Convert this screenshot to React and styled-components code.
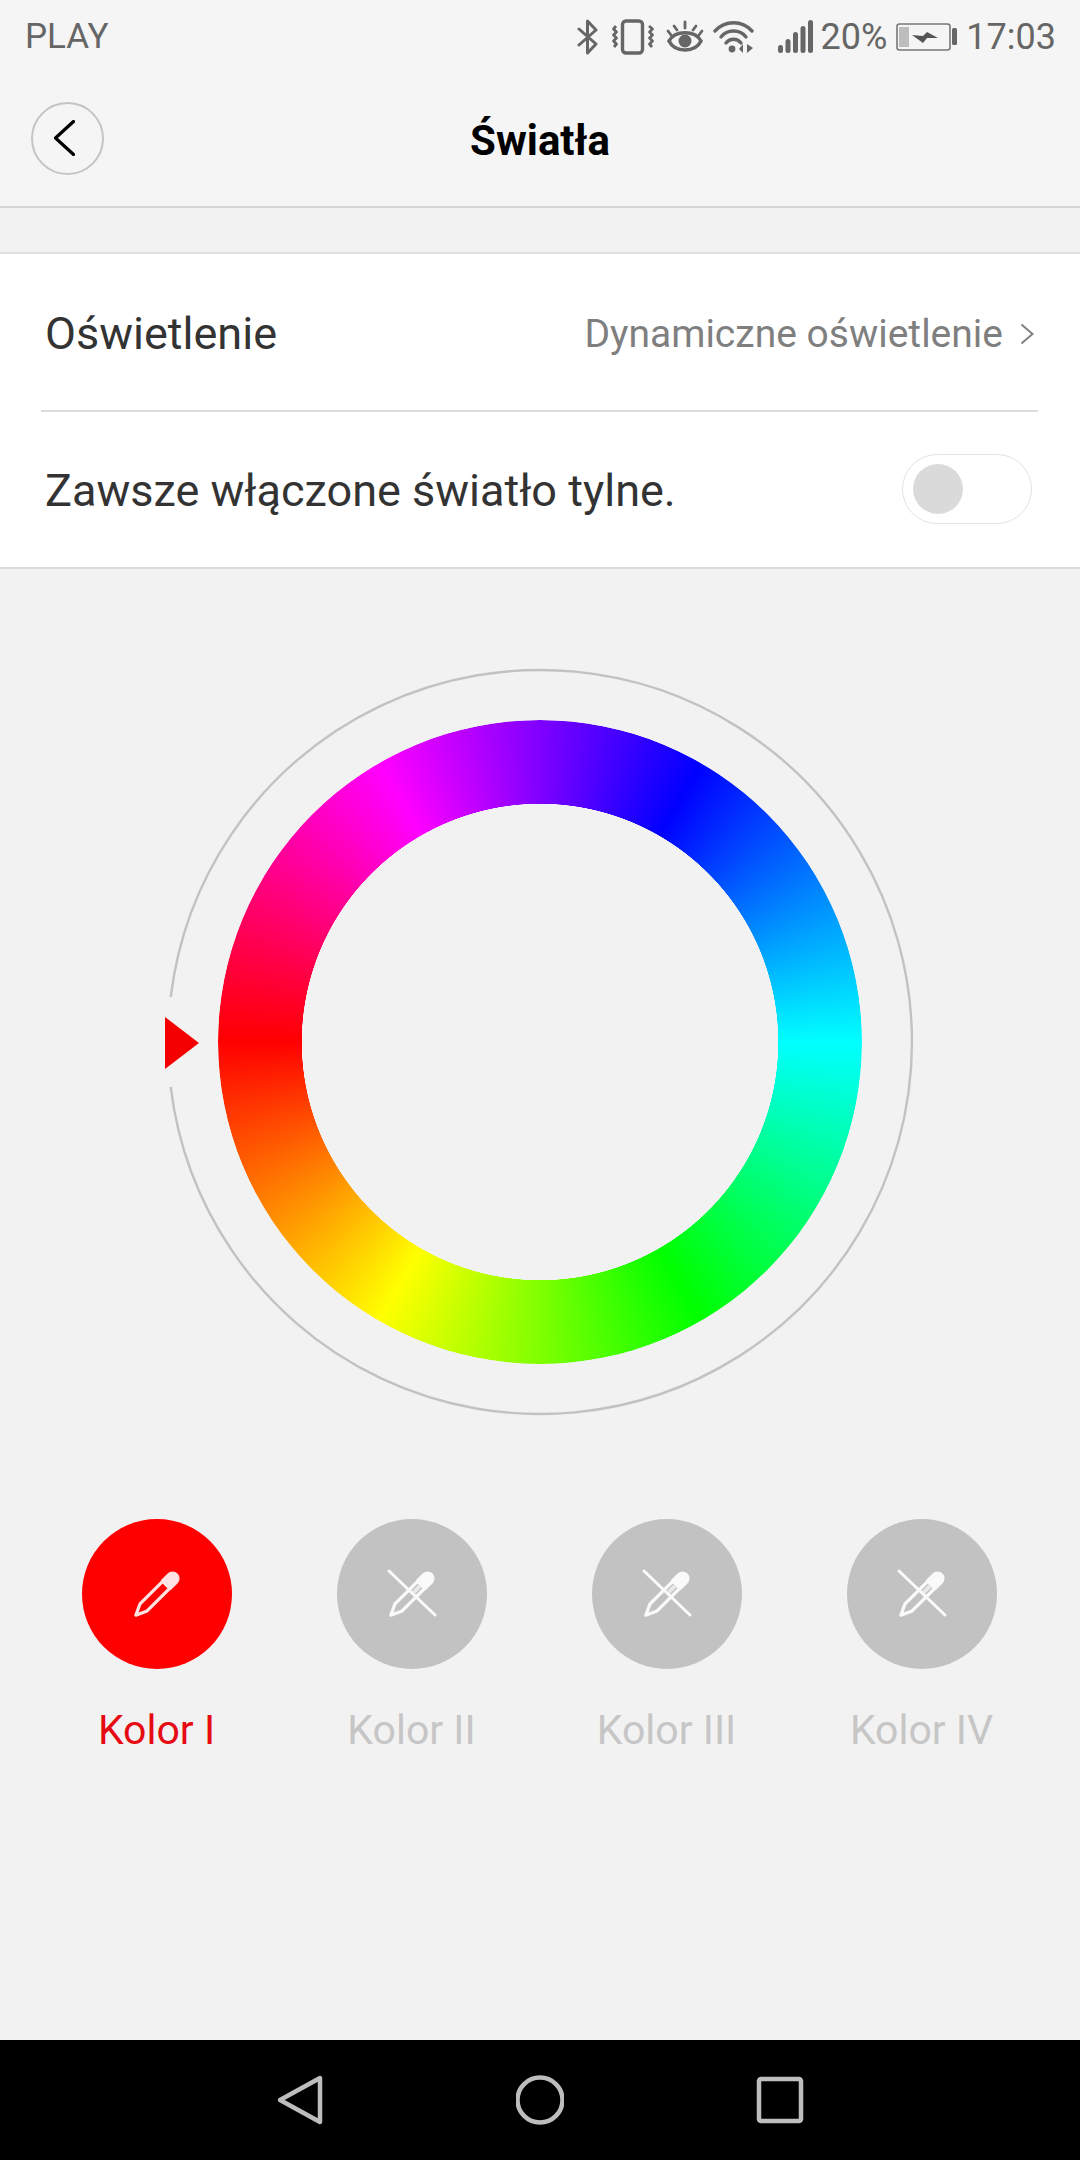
import React from "react"
import styled, { createGlobalStyle } from "styled-components"

const GlobalStyle = createGlobalStyle`
  html, body { margin: 0; padding: 0; background: #f2f2f2; }
  * { box-sizing: border-box; }
`

const Page = styled.div`
  width: 1080px;
  height: 2160px;
  display: flex;
  flex-direction: column;
  background: #f2f2f2;
  font-family: Roboto, "Noto Sans", sans-serif;
  overflow: hidden;
`

const StatusBar = styled.div`
  height: 70px;
  flex: none;
  padding: 3px 24px 0 25px;
  display: flex;
  align-items: center;
  justify-content: space-between;
  background: #f5f5f5;
  color: #666;
  font-size: 35px;
  svg { display: block; }
`

const StatusRight = styled.div`
  display: flex;
  align-items: center;
`

const Percent = styled.span`
  font-size: 36px;
  margin: 0 9px 0 7px;
`

const Clock = styled.span`
  font-size: 36px;
  margin-left: 9px;
`

const Header = styled.div`
  height: 138px;
  flex: none;
  padding-left: 31px;
  display: flex;
  align-items: center;
  position: relative;
  background: #f5f5f5;
  border-bottom: 2px solid #d6d6d6;
`

const BackButton = styled.div`
  width: 73px;
  height: 73px;
  padding-right: 6px;
  border: 2px solid #c4c4c4;
  border-radius: 50%;
  display: flex;
  align-items: center;
  justify-content: center;
`

const Title = styled.div`
  position: absolute;
  left: 0;
  right: 0;
  top: 46px;
  text-align: center;
  font-size: 42px;
  font-weight: 700;
  line-height: 50px;
  color: #000;
`

const Band = styled.div`
  height: 46px;
  flex: none;
  border-bottom: 2px solid #e0e0e0;
`

const Settings = styled.div`
  flex: none;
  background: #fff;
  border-bottom: 2px solid #d9d9d9;
`

const Row = styled.div`
  height: ${props => props.$height}px;
  padding: 2px 46px 0 45px;
  display: flex;
  align-items: center;
  justify-content: space-between;
  color: #333;
  font-size: 45px;
`

const Divider = styled.div`
  height: 2px;
  margin: 0 42px 0 41px;
  background: #dcdcdc;
`

const RowValue = styled.div`
  display: flex;
  align-items: center;
  gap: 17px;
  margin-top: 2px;
  color: #7f7f7f;
  font-size: 39px;
`

const Toggle = styled.div`
  width: 130px;
  height: 70px;
  padding: 0 10px;
  margin: -4px 2px 0 0;
  border: 1px solid #e2e2e2;
  border-radius: 35px;
  display: flex;
  align-items: center;
  &::before {
    content: "";
    width: 50px;
    height: 50px;
    border-radius: 50%;
    background: #dadada;
  }
`

const Content = styled.div`
  flex: 1;
  display: flex;
  flex-direction: column;
  align-items: center;
  padding-top: 99px;
`

const Dial = styled.div`
  width: 748px;
  height: 748px;
  display: grid;
  place-items: center;
  position: relative;
  > * { grid-area: 1 / 1; }
`

const HueRing = styled.div`
  width: 644px;
  height: 644px;
  border-radius: 50%;
  background: conic-gradient(from 30deg, #0000ff, #00ffff 60deg, #00ff00 120deg, #ffff00 180deg, #ff0000 240deg, #ff00ff 300deg, #0000ff 360deg);
  mask: radial-gradient(circle closest-side, transparent 238px, #000 238.5px);
`

const Marker = styled.div`
  position: absolute;
  left: -1px;
  top: 349px;
  width: 0;
  height: 0;
  border-left: 34px solid #f50000;
  border-top: 26px solid transparent;
  border-bottom: 26px solid transparent;
`

const Swatches = styled.div`
  margin: 103px 2px 0 0;
  display: flex;
  gap: 105px;
`

const Swatch = styled.div`
  width: 150px;
  display: flex;
  flex-direction: column;
  align-items: center;
`

const SwatchCircle = styled.div`
  width: 150px;
  height: 150px;
  border-radius: 50%;
  background: ${props => props.$active ? "#ff0000" : "#c2c2c2"};
  display: flex;
  align-items: center;
  justify-content: center;
`

const SwatchLabel = styled.div`
  margin-top: 36px;
  font-size: 41px;
  line-height: 50px;
  white-space: nowrap;
  color: ${props => props.$active ? "#e60b12" : "#c6c6c6"};
`

const NavBar = styled.div`
  height: 120px;
  flex: none;
  background: #000;
  display: flex;
  align-items: center;
  justify-content: center;
  gap: 192px;
  svg { display: block; }
`

const Bluetooth = () => (
  <svg width="22" height="36" viewBox="0 0 22 36" fill="none" stroke="#666" strokeWidth="3" strokeLinejoin="round" strokeLinecap="round">
    <path d="M2 10 L19 25 L10.5 34 V2 L19 11 L2 26" />
  </svg>
)

const Vibrate = () => (
  <svg width="44" height="36" viewBox="0 0 44 36" fill="none" stroke="#666" strokeLinejoin="round" style={{ marginLeft: 12 }}>
    <rect x="11.5" y="2" width="20" height="32" rx="3.5" strokeWidth="3.4" />
    <path d="M5 7 L2.5 10 L5.5 13 L2.5 16 L5.5 19 L2.5 22 L5.5 25 L3 28" strokeWidth="2.8" />
    <path d="M38 7 L41.5 10 L38.5 13 L41.5 16 L38.5 19 L41.5 22 L38.5 25 L41 28" strokeWidth="2.8" />
  </svg>
)

const Eye = () => (
  <svg width="38" height="34" viewBox="0 0 38 34" fill="none" stroke="#666" strokeLinecap="round" style={{ marginLeft: 11 }}>
    <path d="M3 21 C9 10 29 10 35 21 C29 33 9 33 3 21 Z" strokeWidth="3.6" />
    <circle cx="19" cy="21" r="6.5" fill="#666" stroke="none" />
    <path d="M19 2 V8 M8 6 L11 10 M30 6 L27 10 M2 11 L5 15 M36 11 L33 15" strokeWidth="2.8" />
  </svg>
)

const Wifi = () => (
  <svg width="42" height="34" viewBox="0 0 42 34" fill="none" stroke="#666" strokeLinecap="round" style={{ marginLeft: 9 }}>
    <path d="M2 11 C12 0 29 0 39 11" strokeWidth="3.4" />
    <path d="M8 17 C14 9 27 9 33 17" strokeWidth="3.4" />
    <path d="M13 23 C17 18 24 18 28 23" strokeWidth="3.4" />
    <circle cx="19" cy="29" r="3.4" fill="#666" stroke="none" />
    <path d="M30 24 V33 L26 29 Z M34 24 V33 L40 28 Z" fill="#666" stroke="none" />
  </svg>
)

const Signal = () => (
  <svg width="36" height="34" viewBox="0 0 36 34" fill="#666" style={{ marginLeft: 23 }}>
    <rect x="0" y="25" width="5" height="8" rx="2.5" />
    <rect x="7.5" y="19" width="5" height="14" rx="2.5" />
    <rect x="15" y="12" width="5" height="21" rx="2.5" />
    <rect x="22.5" y="6" width="5" height="27" rx="2.5" />
    <rect x="30" y="0" width="5" height="33" rx="2.5" />
  </svg>
)

const Battery = () => (
  <svg width="61" height="28" viewBox="0 0 61 28">
    <rect x="1" y="1" width="53" height="26" rx="2.5" fill="none" stroke="#777" strokeWidth="1.6" />
    <rect x="3" y="4" width="10" height="20" fill="#bdbdbd" />
    <rect x="56" y="5" width="5" height="17" rx="1.5" fill="#666" />
    <path d="M16 12 L27 13 L31 9 L42 15 L31 15 L27 20 Z" fill="#555" />
  </svg>
)

const BackChevron = () => (
  <svg width="21" height="36" viewBox="0 0 21 36" fill="none" stroke="#000" strokeWidth="3.2" strokeLinecap="round" strokeLinejoin="round">
    <path d="M19.5 1.5 L1.5 18 L19.5 34.5" />
  </svg>
)

const SmallChevron = () => (
  <svg width="14" height="22" viewBox="0 0 14 22" fill="none" stroke="#808080" strokeWidth="2">
    <path d="M1.5 1.5 L12.5 11 L1.5 20.5" />
  </svg>
)

const Dropper = ({ crossed }) => (
  <svg width="54" height="54" viewBox="0 0 54 54" fill="none">
    <g transform="rotate(45 27 27)" stroke={crossed ? "#fafafa" : "#fde3e3"} strokeLinejoin="round">
      <path d="M20.5 14 V5 A6.5 6.5 0 0 1 33.5 5 V14 Z" fill={crossed ? "#fafafa" : "#fde3e3"} strokeWidth="1" />
      <path d="M22 14 H32 V46 L27 57 L22 46 Z" strokeWidth="3.2" />
      {crossed && <rect x="25" y="15" width="4" height="10" fill="#e8e8e8" stroke="none" />}
    </g>
    {crossed && <path d="M4 4 L50 48" stroke="#fafafa" strokeWidth="3" strokeLinecap="round" />}
  </svg>
)

const OuterRing = () => (
  <svg width="748" height="748" viewBox="0 0 748 748" fill="none">
    <path d="M4.7 329 A372 372 0 1 1 4.7 419" stroke="#c2c2c2" strokeWidth="2.4" />
  </svg>
)

const swatches = ["Kolor I", "Kolor II", "Kolor III", "Kolor IV"]

const App = () => {
  return (
    <Page>
      <GlobalStyle />
      <StatusBar>
        <span>PLAY</span>
        <StatusRight>
          <Bluetooth />
          <Vibrate />
          <Eye />
          <Wifi />
          <Signal />
          <Percent>20%</Percent>
          <Battery />
          <Clock>17:03</Clock>
        </StatusRight>
      </StatusBar>
      <Header>
        <BackButton>
          <BackChevron />
        </BackButton>
        <Title>Światła</Title>
      </Header>
      <Band />
      <Settings>
        <Row $height={156}>
          <span>Oświetlenie</span>
          <RowValue>Dynamiczne oświetlenie <SmallChevron /></RowValue>
        </Row>
        <Divider />
        <Row $height={155}>
          <span>Zawsze włączone światło tylne.</span>
          <Toggle />
        </Row>
      </Settings>
      <Content>
        <Dial>
          <OuterRing />
          <HueRing />
          <Marker />
        </Dial>
        <Swatches>
          {swatches.map((label, i) => (
            <Swatch key={label}>
              <SwatchCircle $active={i === 0}>
                <Dropper crossed={i !== 0} />
              </SwatchCircle>
              <SwatchLabel $active={i === 0}>{label}</SwatchLabel>
            </Swatch>
          ))}
        </Swatches>
      </Content>
      <NavBar>
        <svg width="48" height="52" viewBox="0 0 48 52" fill="none" stroke="#bdbdbd" strokeWidth="4.5" strokeLinejoin="round">
          <path d="M44 4 V48 L4 26 Z" />
        </svg>
        <svg width="48" height="52" viewBox="0 0 48 52" fill="none" stroke="#bdbdbd" strokeWidth="4.5">
          <circle cx="24" cy="26" r="22.5" />
        </svg>
        <svg width="48" height="52" viewBox="0 0 48 52" fill="none" stroke="#bdbdbd" strokeWidth="4.5" strokeLinejoin="round">
          <rect x="3" y="5" width="42" height="42" rx="2" />
        </svg>
      </NavBar>
    </Page>
  )
}

export default App
